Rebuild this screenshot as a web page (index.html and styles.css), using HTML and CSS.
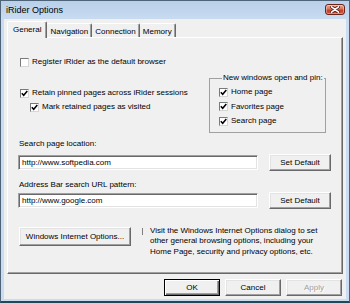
FILE: index.html
```html
<!DOCTYPE html>
<html>
<head>
<meta charset="utf-8">
<link rel="stylesheet" href="styles.css">
</head>
<body>
<div class="window">
  <div class="titlebar">
    <span class="title">iRider Options</span>
    <div class="close">
      <svg width="10" height="7" viewBox="0 0 10 7"><path d="M1.5 0.8 L8.5 6.2 M8.5 0.8 L1.5 6.2" stroke="#5a1a10" stroke-width="3.2" stroke-linecap="round"/><path d="M1.5 0.8 L8.5 6.2 M8.5 0.8 L1.5 6.2" stroke="#fff" stroke-width="1.6" stroke-linecap="round"/></svg>
    </div>
  </div>
  <div class="client">
    <div class="tabs">
      <div class="tab active">General</div>
      <div class="tab">Navigation</div>
      <div class="tab">Connection</div>
      <div class="tab">Memory</div>
    </div>
    <div class="panel">
      <label class="check reg"><span class="box"></span>Register iRider as the default browser</label>
      <div class="mid">
        <div class="leftcol">
          <label class="check"><span class="box"><svg width="7" height="7" viewBox="0 0 7 7"><path d="M0.8 3.2 L2.7 5.3 L6.3 1" fill="none" stroke="#000" stroke-width="1.5"/></svg></span>Retain pinned pages across iRider sessions</label>
          <label class="check indent"><span class="box"><svg width="7" height="7" viewBox="0 0 7 7"><path d="M0.8 3.2 L2.7 5.3 L6.3 1" fill="none" stroke="#000" stroke-width="1.5"/></svg></span>Mark retained pages as visited</label>
        </div>
        <fieldset class="group">
          <legend>New windows open and pin:</legend>
          <label class="check"><span class="box"><svg width="7" height="7" viewBox="0 0 7 7"><path d="M0.8 3.2 L2.7 5.3 L6.3 1" fill="none" stroke="#000" stroke-width="1.5"/></svg></span>Home page</label>
          <label class="check"><span class="box"><svg width="7" height="7" viewBox="0 0 7 7"><path d="M0.8 3.2 L2.7 5.3 L6.3 1" fill="none" stroke="#000" stroke-width="1.5"/></svg></span>Favorites page</label>
          <label class="check"><span class="box"><svg width="7" height="7" viewBox="0 0 7 7"><path d="M0.8 3.2 L2.7 5.3 L6.3 1" fill="none" stroke="#000" stroke-width="1.5"/></svg></span>Search page</label>
        </fieldset>
      </div>
      <div class="flabel first">Search page location:</div>
      <div class="frow first">
        <div class="input">http://www.softpedia.com</div>
        <button class="btn setdef">Set Default</button>
      </div>
      <div class="flabel second">Address Bar search URL pattern:</div>
      <div class="frow second">
        <div class="input">http://www.google.com</div>
        <button class="btn setdef">Set Default</button>
      </div>
      <div class="wio">
        <button class="btn wiobtn">Windows Internet Options...</button>
        <span class="sep"></span>
        <p class="desc">Visit the Windows Internet Options dialog to set<br>other general browsing options, including your<br>Home Page, security and privacy options, etc.</p>
      </div>
    </div>
    <div class="buttons">
      <button class="btn dlg default">OK</button>
      <button class="btn dlg">Cancel</button>
      <button class="btn dlg" disabled>Apply</button>
    </div>
  </div>
</div>
</body>
</html>
```
FILE: styles.css
```css
* { box-sizing: border-box; }
html, body { margin: 0; padding: 0; }
body {
  width: 350px;
  height: 303px;
  overflow: hidden;
  background: #1d4a56;
  font-family: "Liberation Sans", Arial, sans-serif;
  font-size: 8px;
  color: #000;
}
.window {
  width: 350px;
  height: 303px;
  border: 1px solid #4f6378;
  border-bottom: 2px solid #1d4a56;
  background: linear-gradient(#b9d0ea, #c9dcf1 20px, #c9dcf1);
  padding: 0 3px 2px 3px;
  display: flex;
  flex-direction: column;
}
.titlebar {
  height: 18px;
  margin: 0 -3px;
  padding: 3px 4px 0 5px;
  display: flex;
  justify-content: space-between;
  align-items: flex-start;
}
.title {
  font-size: 9px;
  line-height: 13px;
  color: #000;
}
.close {
  width: 20px;
  height: 11px;
  border: 1px solid #6b2419;
  border-radius: 3px;
  background: linear-gradient(#e9a592, #d9735c 45%, #c4432c 55%, #c9553b);
  display: flex;
  align-items: center;
  justify-content: center;
  box-shadow: inset 0 0 0 1px rgba(255,255,255,0.35);
}
.close svg { display: block; }
.client {
  flex: 1;
  background: #f0f0f0;
  padding: 2px 3px 3px 3px;
  display: flex;
  flex-direction: column;
}
.tabs {
  height: 16px;
  display: flex;
  align-items: flex-end;
}
.tab {
  height: 14px;
  padding: 0 3px;
  line-height: 15px;
  border-top: 1px solid #fff;
  border-left: 1px solid #fff;
  border-right: 1px solid #696969;
  box-shadow: inset -1px 0 0 #a0a0a0;
  border-radius: 2px 2px 0 0;
  white-space: nowrap;
}
.tab + .tab { border-left: none; }
.tab.active {
  height: 17px;
  margin-bottom: -1px;
  padding: 0 5px;
  line-height: 16px;
  background: #f0f0f0;
  position: relative;
  z-index: 1;
}
.panel {
  flex: 1;
  border-top: 1px solid #fff;
  border-left: 1px solid #fff;
  border-right: 1px solid #696969;
  border-bottom: 1px solid #696969;
  box-shadow: inset -1px -1px 0 #a0a0a0;
  padding: 0 0 0 11px;
}
.check {
  display: flex;
  align-items: center;
  height: 14px;
  line-height: 14px;
  white-space: nowrap;
}
.box {
  width: 9px;
  height: 9px;
  margin: 0 3px 0 1px;
  background: #fff;
  border: 1px solid;
  border-color: #7a7a7a #d6d6d6 #d6d6d6 #7a7a7a;
  flex: none;
  display: flex;
  align-items: center;
  justify-content: center;
}
.box svg { display: block; }
.reg { margin-top: 17px; }
.mid {
  display: flex;
  align-items: flex-start;
  margin-top: 4px;
}
.leftcol {
  flex: 1;
  padding-top: 13px;
}
.indent { padding-left: 10px; }
.group {
  width: 117px;
  margin: 0 16px 0 0;
  padding: 2px 0 3px 8px;
  border: 1px solid #a0a0a0;
  min-width: 0;
}
.group legend {
  margin-left: 4px;
  padding: 0 1px;
  line-height: 10px;
  white-space: nowrap;
}
.group .check { height: 14.5px; }
.flabel {
  line-height: 12px;
  white-space: nowrap;
}
.flabel.first { margin-top: 5px; }
.flabel.second { margin-top: 8px; }
.frow {
  display: flex;
  align-items: center;
  height: 17px;
  margin-left: -1px;
}
.frow.first { margin-top: 4px; }
.frow.second { margin-top: 1px; }
.input {
  width: 240px;
  height: 15px;
  background: #fff;
  border: 1px solid;
  border-color: #a0a0a0 #fff #fff #a0a0a0;
  box-shadow: inset 1px 1px 0 #696969, inset -1px -1px 0 #e3e3e3;
  padding-left: 3px;
  line-height: 13px;
  white-space: nowrap;
}
.btn {
  font-family: inherit;
  font-size: 8px;
  color: #000;
  background: #f0f0f0;
  border: 1px solid;
  border-color: #fff #696969 #696969 #fff;
  box-shadow: inset -1px -1px 0 #a0a0a0, inset 1px 1px 0 #e3e3e3;
  padding: 0;
  margin: 0;
  white-space: nowrap;
}
.setdef {
  width: 62px;
  height: 17px;
  margin-left: 11px;
}
.wio {
  display: flex;
  align-items: flex-start;
  margin-top: 17px;
}
.wiobtn {
  width: 112px;
  height: 19px;
  margin-top: 1px;
}
.sep {
  width: 1px;
  height: 7px;
  margin: 2px 0 0 11px;
  background: #808080;
}
.desc {
  margin: 0 0 0 7px;
  line-height: 10.5px;
  white-space: nowrap;
}
.buttons {
  display: flex;
  justify-content: flex-end;
  gap: 5px;
  margin-top: 5px;
  padding-right: 1px;
}
.dlg {
  width: 56px;
  height: 17px;
}
.dlg.default {
  border: 1px solid #000;
  box-shadow: inset 1px 1px 0 #fff, inset -1px -1px 0 #696969, inset -2px -2px 0 #a0a0a0;
}
.dlg:disabled {
  color: #a0a0a0;
  text-shadow: 1px 1px 0 #fff;
}
```
